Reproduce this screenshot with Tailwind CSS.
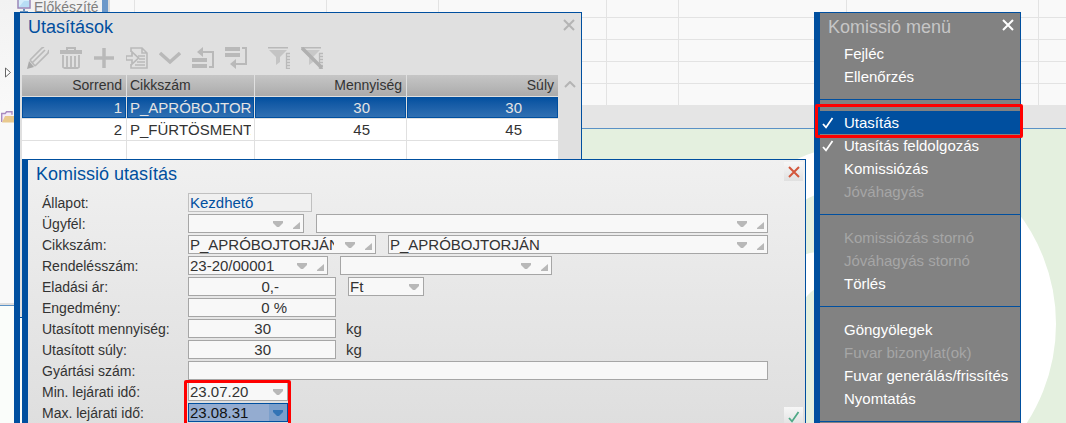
<!DOCTYPE html>
<html lang="hu">
<head>
<meta charset="utf-8">
<title>Komissió utasítás</title>
<script src="https://cdn.jsdelivr.net/npm/@tailwindcss/browser@4"></script>
</head>
<body class="bg-[#f9f9f9] font-['Liberation_Sans',Arial,sans-serif] text-[15px] text-[#333]">
<svg class="hidden">
  <symbol id="down" viewBox="0 0 10 6"><path d="M0 0h10v2L6 6H4L0 2z" fill="currentColor"/></symbol>
  <symbol id="corner" viewBox="0 0 7 7"><path d="M7 0v7H0V6z" fill="currentColor"/></symbol>
  <symbol id="tick" viewBox="0 0 12 12"><path d="M1 7l3 3.4L10.500 1" fill="none" stroke="currentColor" stroke-width="1.800"/></symbol>
  <symbol id="cross" viewBox="0 0 12 12"><path d="M1 1l10 10M11 1L1 11" fill="none" stroke="currentColor" stroke-width="2"/></symbol>
</svg>

<main class="relative h-screen overflow-hidden">
  <!-- Application behind the windows -->
  <div class="flex h-full flex-col">
    <div class="flex h-[105px] shrink-0">
      <div class="flex w-[110px] shrink-0 items-start bg-linear-to-b from-[#f2f2f2] to-[#f9f9f9] pl-[17px]">
        <svg class="h-[13px] w-[14px] shrink-0" viewBox="0 0 14 13"><path d="M1 0v8h12V0" fill="#d5eefb" stroke="#9a86b8" stroke-width="1.500"/><path d="M2 7l5-6h5v6z" fill="#b8def5"/><path d="M6 9h2v2h3v2H3v-2h3z" fill="#6d94bd"/></svg>
        <span class="ml-[3px] w-[68px] shrink-0 whitespace-nowrap text-[14px] leading-[14px] text-[#7f7f7f]">Előkészíté</span>
        <span class="h-4 w-[6px] bg-[#6c98c9]"></span>
        <span class="h-4 w-[2px] bg-[#dcdcdc]"></span>
      </div>
      <div class="flex min-w-0 grow">
        <div class="w-[25px] shrink-0 border-r border-[#e3e3e3]"></div>
        <div class="w-[192px] shrink-0 border-r border-[#e3e3e3]"></div>
        <div class="w-[112px] shrink-0 border-r border-[#e3e3e3]"></div>
        <div class="grow bg-[repeating-linear-gradient(#f9f9f9_0_21px,#e3e3e3_21px_22px)] bg-[position:0_-4px]">
          <div class="flex h-full">
            <div class="w-[168px] shrink-0 border-r border-[#e3e3e3]"></div>
            <div class="w-[72px] shrink-0 border-r border-[#e3e3e3]"></div>
            <div class="w-[168px] shrink-0 border-r border-[#e3e3e3]"></div>
            <div class="w-[192px] shrink-0 border-r border-[#e3e3e3]"></div>
          </div>
        </div>
      </div>
    </div>
    <div class="flex min-h-0 grow">
      <div class="flex w-[22px] shrink-0 flex-col">
        <div class="h-[200px] shrink-0 border-b-2 border-[#dedede]"></div>
        <div class="grow border-t border-[#5b92c6] bg-[#fafdfa]"></div>
      </div>
      <div class="flex min-w-0 grow flex-col">
        <div class="h-6 shrink-0 border-b border-[#5b92c6] bg-[#e5e5e5]"></div>
        <div class="flex grow justify-start overflow-hidden bg-[#e4f0df]">
          <svg class="ml-[658px] h-[294px] w-[386px] shrink-0" viewBox="680 129 386 294">
            <circle cx="874" cy="324" r="162" fill="none" stroke="#fff" stroke-width="40"/>
            <path d="M800 257Q808 252 820 252V286Q810 291 804 300z" fill="#fff"/>
          </svg>
        </div>
      </div>
    </div>
  </div>
  <svg class="absolute left-[5px] top-[67px] h-[11px] w-[6px]" viewBox="0 0 6 11"><path d="M.5 1v9l5-4.500z" fill="#fff" stroke="#666"/></svg>
  <svg class="absolute left-[1px] top-[111px] h-[12px] w-[14px]" viewBox="0 0 14 12"><path d="M.7 11V2.500h3.500L5.500.8H11v3" fill="#f5ecf8" stroke="#a98abf" stroke-width="1.400"/><path d="M1 11.500L4 5h10v6.500z" fill="#e9c98e"/></svg>
  <div class="absolute bottom-0 left-[14px] top-[317px] w-[6px] bg-[#004f9f]"></div>

  <!-- Instruction list -->
  <section class="absolute left-[14px] top-[12px] flex h-[306px] w-[568px] flex-col border border-l-[6px] border-[#004f9f] bg-[#e0e0e0]">
    <header class="flex h-[28px] items-center justify-between pl-2 pr-[6px]">
      <h2 class="text-[18px] text-[#004f9f]">Utasítások</h2>
      <button aria-label="Bezárás" class="mb-[5px] text-[#b4b4b4]"><svg class="size-3"><use href="#cross"/></svg></button>
    </header>
    <div class="flex h-[34px] items-center gap-[11px] pl-[7px] text-[#b9b9b9]">
      <button aria-label="Módosítás"><svg class="size-[22px]" viewBox="0 0 22 22"><path d="M0 22l2-8 5 6z" fill="#aaa"/><path d="M3 13L15 1l2-1M5 16L18 3M8 19L21 6l1-3M3 13l5 6" fill="none" stroke="currentColor" stroke-width="1.700"/></svg></button>
      <button aria-label="Törlés"><svg class="size-[22px]" viewBox="0 0 22 22"><path d="M7 3V1h8v2" fill="none" stroke="currentColor" stroke-width="2"/><path d="M0 3h22v4H0z" fill="currentColor"/><path d="M3 8v12l1.500 1h13l1.500-1V8M7 9v12M11 9v12M15 9v12" fill="none" stroke="currentColor" stroke-width="1.800"/></svg></button>
      <button aria-label="Új"><svg class="size-[22px]" viewBox="0 0 22 22"><path d="M11 1v20M1 11h20" stroke="currentColor" stroke-width="3.500"/></svg></button>
      <button aria-label="Beolvasás"><svg class="size-[22px]" viewBox="0 0 22 22"><path d="M5 5V1h11l5 5v15H5v-4M16 1v5h5" fill="none" stroke="currentColor" stroke-width="1.600"/><path d="M12 9h7M13 12h6M11 15h8M9 18h10" stroke="currentColor" stroke-width="1.400"/><path d="M0 9h6V5l6.500 6L6 17v-4H0z" fill="#e0e0e0" stroke="currentColor" stroke-width="1.700"/></svg></button>
      <button aria-label="Lenyitás"><svg class="size-[22px]" viewBox="0 0 22 22"><path d="M1 6l10 9L21 6" fill="none" stroke="currentColor" stroke-width="3.500"/></svg></button>
      <button aria-label="Felfelé"><svg class="size-[22px]" viewBox="0 0 22 22"><path d="M0 11h15v4H0zM0 17h15v4H0z" fill="currentColor"/><path d="M9 5h12v15h-4" fill="none" stroke="currentColor" stroke-width="2"/><path d="M5 5l6-5v10z" fill="currentColor"/></svg></button>
      <button aria-label="Lefelé"><svg class="size-[22px]" viewBox="0 0 22 22"><path d="M0 0h15v4H0zM0 6h15v4H0z" fill="currentColor"/><path d="M17 1h4v16H9" fill="none" stroke="currentColor" stroke-width="2"/><path d="M5 17l6-5v10z" fill="currentColor"/></svg></button>
      <button aria-label="Szűrő" class="ml-[10px]"><svg class="size-[22px]" viewBox="0 0 22 22"><path d="M0 0h20v1.500H0z" fill="currentColor"/><path d="M1 3h18l-7 7v5l-4 3v-8z" fill="#c4c4c4"/><path d="M18 6.500h4M18 9.500h4M18 12.500h4M18 15.500h4M18 18.500h4M18 21.500h4M18.500 6v16" stroke="currentColor" stroke-width="1.300"/></svg></button>
      <button aria-label="Szűrő törlése"><svg class="size-[22px]" viewBox="0 0 22 22"><path d="M0 0h20v1.500H0z" fill="currentColor"/><path d="M1 3h18l-7 7v5l-4 3v-8z" fill="#c8c8c8"/><path d="M18 6.500h4M18 9.500h4M18 12.500h4M18 15.500h4M18 18.500h4M18 21.500h4M18.500 6v16" stroke="currentColor" stroke-width="1.300"/><path d="M1 1l20 20" stroke="#b0b0b0" stroke-width="3.500"/></svg></button>
    </div>
    <div class="flex min-h-0 grow overflow-hidden pl-[2px]">
      <table class="w-[536px] table-fixed border-separate border-spacing-0 self-start bg-white leading-[21px]">
        <colgroup><col class="w-[105px]"><col class="w-[128px]"><col class="w-[152px]"><col></colgroup>
        <thead>
          <tr class="h-[22px] bg-linear-to-b from-[#c6c6c6] to-[#aaa] text-[14px]">
            <th class="border-b border-r border-[#e0e0e0] p-0 pr-1 text-right font-normal">Sorrend</th>
            <th class="border-b border-r border-[#e0e0e0] p-0 pl-[3px] text-left font-normal">Cikkszám</th>
            <th class="border-b border-r border-[#e0e0e0] p-0 pr-1 text-right font-normal">Mennyiség</th>
            <th class="border-b border-[#e0e0e0] p-0 pr-1 text-right font-normal">Súly</th>
          </tr>
        </thead>
        <tbody>
          <tr class="h-[22px] bg-linear-to-b from-[#004f9f] to-[#3373b4] text-[#e4e4e4]">
            <td class="border-b border-r border-[#e0e0e0] p-0 pr-1 text-right inset-shadow-[0_0_0_1px_#004f9f]">1</td>
            <td class="border-b border-r border-[#e0e0e0] p-0 px-[3px] inset-shadow-[0_0_0_1px_#004f9f]"><div class="h-[21px] overflow-hidden whitespace-nowrap">P_APRÓBOJTORJÁN</div></td>
            <td class="border-b border-r border-[#e0e0e0] p-0 pr-9 text-right inset-shadow-[0_0_0_1px_#004f9f]">30</td>
            <td class="border-b border-[#e0e0e0] p-0 pr-9 text-right inset-shadow-[0_0_0_1px_#004f9f]">30</td>
          </tr>
          <tr class="h-[22px]">
            <td class="border-b border-r border-[#e0e0e0] p-0 pr-1 text-right">2</td>
            <td class="border-b border-r border-[#e0e0e0] p-0 px-[3px]"><div class="h-[21px] overflow-hidden whitespace-nowrap">P_FÜRTÖSMENTA</div></td>
            <td class="border-b border-r border-[#e0e0e0] p-0 pr-9 text-right">45</td>
            <td class="border-b border-[#e0e0e0] p-0 pr-9 text-right">45</td>
          </tr>
          <tr class="h-[22px]">
            <td class="border-r border-[#e0e0e0]"></td><td class="border-r border-[#e0e0e0]"></td><td class="border-r border-[#e0e0e0]"></td><td></td>
          </tr>
        </tbody>
      </table>
      <button aria-label="Görgetés fel" class="ml-[6px] mt-[6px] self-start text-[#b4b4b4]"><svg class="h-[7px] w-3" viewBox="0 0 12 7"><path d="M1 6l5-5 5 5" fill="none" stroke="currentColor" stroke-width="2"/></svg></button>
    </div>
  </section>

  <!-- Instruction form -->
  <section class="absolute left-[22px] top-[159px] w-[784px] border border-l-[6px] border-[#004f9f] bg-linear-to-b from-[#f0f0f0] to-[#dedede]">
    <header class="flex h-[33px] items-start justify-between pl-2 pr-[2px]">
      <h2 class="text-[18px] leading-[28px] text-[#004f9f]">Komissió utasítás</h2>
      <button aria-label="Bezárás" class="mt-[2px] flex size-[19px] items-center justify-center bg-linear-to-b from-[#f7f7f7] to-[#e0e0e0] text-[#d3573c]"><svg class="size-3"><use href="#cross"/></svg></button>
    </header>
    <div class="flex items-end justify-between pr-[2px]">
      <form class="flex flex-col gap-[2px] pb-2 pl-[14px] leading-[19px]">
        <div class="flex h-[19px]"><label for="f1" class="w-[146px] text-[14px] leading-[21px]">Állapot:</label>
          <input id="f1" readonly value="Kezdhető" class="w-[124px] border border-[#c0c0c0] bg-[#f0f0f0] px-[1px] text-[#004f9f]"></div>
        <div class="flex h-[19px]"><label for="f2" class="w-[146px] text-[14px] leading-[21px]">Ügyfél:</label>
          <div class="flex w-[116px] items-center border border-[#a6a6a6] bg-[#f8f8f8] pr-[3px] text-[#b8b8b8]"><input id="f2" class="w-0 grow px-[1px] text-[#333]"><button type="button" aria-label="Lista" class="ml-[10px]"><svg class="h-[6px] w-[10px]"><use href="#down"/></svg></button><button type="button" aria-label="Megnyitás" class="ml-[10px] mt-1"><svg class="size-[7px]"><use href="#corner"/></svg></button></div>
          <div class="ml-3 flex w-[452px] items-center border border-[#a6a6a6] bg-[#f8f8f8] pr-[3px] text-[#b8b8b8]"><input aria-label="Ügyfél neve" class="w-0 grow px-[1px] text-[#333]"><button type="button" aria-label="Lista" class="ml-[10px]"><svg class="h-[6px] w-[10px]"><use href="#down"/></svg></button><button type="button" aria-label="Megnyitás" class="ml-[10px] mt-1"><svg class="size-[7px]"><use href="#corner"/></svg></button></div></div>
        <div class="flex h-[19px]"><label for="f3" class="w-[146px] text-[14px] leading-[21px]">Cikkszám:</label>
          <div class="flex w-[188px] items-center border border-[#a6a6a6] bg-[#f8f8f8] pr-[3px] text-[#b8b8b8]"><input id="f3" value="P_APRÓBOJTORJÁN" class="w-0 grow px-[1px] text-[#333]"><button type="button" aria-label="Lista" class="ml-[10px]"><svg class="h-[6px] w-[10px]"><use href="#down"/></svg></button><button type="button" aria-label="Megnyitás" class="ml-[10px] mt-1"><svg class="size-[7px]"><use href="#corner"/></svg></button></div>
          <div class="ml-3 flex w-[380px] items-center border border-[#a6a6a6] bg-[#f8f8f8] pr-[3px] text-[#b8b8b8]"><input aria-label="Cikk neve" value="P_APRÓBOJTORJÁN" class="w-0 grow px-[1px] text-[#333]"><button type="button" aria-label="Lista" class="ml-[10px]"><svg class="h-[6px] w-[10px]"><use href="#down"/></svg></button><button type="button" aria-label="Megnyitás" class="ml-[10px] mt-1"><svg class="size-[7px]"><use href="#corner"/></svg></button></div></div>
        <div class="flex h-[19px]"><label for="f4" class="w-[146px] text-[14px] leading-[21px]">Rendelésszám:</label>
          <div class="flex w-[140px] items-center border border-[#a6a6a6] bg-[#f8f8f8] pr-[3px] text-[#b8b8b8]"><input id="f4" value="23-20/00001" class="w-0 grow px-[1px] text-[#333]"><button type="button" aria-label="Lista" class="ml-[10px]"><svg class="h-[6px] w-[10px]"><use href="#down"/></svg></button><button type="button" aria-label="Megnyitás" class="ml-[10px] mt-1"><svg class="size-[7px]"><use href="#corner"/></svg></button></div>
          <div class="ml-3 flex w-[212px] items-center border border-[#a6a6a6] bg-[#f8f8f8] pr-[3px] text-[#b8b8b8]"><input aria-label="Rendelés tétele" class="w-0 grow px-[1px] text-[#333]"><button type="button" aria-label="Lista" class="ml-[10px]"><svg class="h-[6px] w-[10px]"><use href="#down"/></svg></button><button type="button" aria-label="Megnyitás" class="ml-[10px] mt-1"><svg class="size-[7px]"><use href="#corner"/></svg></button></div></div>
        <div class="flex h-[19px]"><label for="f5" class="w-[146px] text-[14px] leading-[21px]">Eladási ár:</label>
          <input id="f5" value="0,-" class="w-[148px] border border-[#a6a6a6] bg-[#f8f8f8] pr-14 text-right">
          <div class="relative ml-3 flex w-[76px] text-[#b8b8b8]"><select aria-label="Pénznem" class="w-full appearance-none border border-[#a6a6a6] bg-[#f8f8f8] px-[1px] leading-[17px] text-[#333]"><option>Ft</option></select><svg class="pointer-events-none absolute right-[5px] top-[7px] h-[6px] w-[10px]"><use href="#down"/></svg></div></div>
        <div class="flex h-[19px]"><label for="f6" class="w-[146px] text-[14px] leading-[21px]">Engedmény:</label>
          <input id="f6" value="0 %" class="w-[148px] border border-[#a6a6a6] bg-[#f8f8f8] pr-12 text-right"></div>
        <div class="flex h-[19px]"><label for="f7" class="w-[146px] text-[14px] leading-[21px]">Utasított mennyiség:</label>
          <input id="f7" value="30" class="w-[148px] border border-[#a6a6a6] bg-[#f8f8f8] pr-16 text-right"><span class="ml-[10px]">kg</span></div>
        <div class="flex h-[19px]"><label for="f8" class="w-[146px] text-[14px] leading-[21px]">Utasított súly:</label>
          <input id="f8" value="30" class="w-[148px] border border-[#a6a6a6] bg-[#f8f8f8] pr-16 text-right"><span class="ml-[10px]">kg</span></div>
        <div class="flex h-[19px]"><label for="f9" class="w-[146px] text-[14px] leading-[21px]">Gyártási szám:</label>
          <input id="f9" class="w-[580px] border border-[#a6a6a6] bg-[#f8f8f8] px-[1px]"></div>
        <div class="flex h-[19px]"><label for="f10" class="w-[146px] text-[14px] leading-[21px]">Min. lejárati idő:</label>
          <div class="flex w-[100px] items-center border border-[#a6a6a6] bg-[#f8f8f8] pr-1 text-[#b8b8b8]"><input id="f10" value="23.07.20" class="w-0 grow px-[1px] text-[#333]"><button type="button" aria-label="Naptár"><svg class="h-[6px] w-[10px]"><use href="#down"/></svg></button></div></div>
        <div class="flex h-[19px]"><label for="f11" class="w-[146px] text-[14px] leading-[21px]">Max. lejárati idő:</label>
          <div class="flex w-[100px] items-center border border-[#004f9f] bg-[#94acd0] text-[#3274b5]"><input id="f11" value="23.08.31" class="w-0 grow px-[1px] text-[#111]"><button type="button" aria-label="Naptár" class="flex h-full w-[18px] items-center justify-center bg-[#7b9fcb]"><svg class="h-[6px] w-[10px]"><use href="#down"/></svg></button></div></div>
      </form>
      <button aria-label="Rendben" class="mb-1 flex size-[19px] items-center justify-center bg-linear-to-b from-[#f7f7f7] to-[#e0e0e0] text-[#4fa987]"><svg class="size-3"><use href="#tick"/></svg></button>
    </div>
  </section>
  <div class="absolute left-[184px] top-[380px] h-[60px] w-[107px] rounded-xs border-3 border-[#f00]"></div>

  <!-- Menu -->
  <nav class="absolute left-[814px] top-[12px] w-[207px] border border-l-[6px] border-[#004f9f] bg-[#828282] leading-[23px] text-white">
    <header class="flex h-[29px] items-center justify-between pl-2 pr-[6px]">
      <h2 class="text-[18px] text-[#c6c6c6]">Komissió menü</h2>
      <button aria-label="Bezárás" class="mb-[5px]"><svg class="size-3"><use href="#cross"/></svg></button>
    </header>
    <button class="block h-[23px] w-full pl-6 text-left">Fejléc</button>
    <button class="block h-[23px] w-full pl-6 text-left">Ellenőrzés</button>
    <hr class="mb-[11px] mt-[11px] border-[#004f9f]">
    <button class="flex h-[23px] w-full items-center bg-[#004f9f] pl-[2px] text-left"><svg class="mr-[10px] size-3"><use href="#tick"/></svg>Utasítás</button>
    <button class="flex h-[23px] w-full items-center pl-[2px] text-left"><svg class="mr-[10px] size-3"><use href="#tick"/></svg>Utasítás feldolgozás</button>
    <button class="block h-[23px] w-full pl-6 text-left">Komissiózás</button>
    <button disabled class="block h-[23px] w-full pl-6 text-left text-[#a6a6a6]">Jóváhagyás</button>
    <hr class="mb-[11px] mt-[11px] border-[#004f9f]">
    <button disabled class="block h-[23px] w-full pl-6 text-left text-[#a6a6a6]">Komissiózás stornó</button>
    <button disabled class="block h-[23px] w-full pl-6 text-left text-[#a6a6a6]">Jóváhagyás stornó</button>
    <button class="block h-[23px] w-full pl-6 text-left">Törlés</button>
    <hr class="mb-[11px] mt-[11px] border-[#004f9f]">
    <button class="block h-[23px] w-full pl-6 text-left">Göngyölegek</button>
    <button disabled class="block h-[23px] w-full pl-6 text-left text-[#a6a6a6]">Fuvar bizonylat(ok)</button>
    <button class="block h-[23px] w-full pl-6 text-left">Fuvar generálás/frissítés</button>
    <button class="block h-[23px] w-full pl-6 text-left">Nyomtatás</button>
    <hr class="mb-[11px] mt-[11px] border-[#004f9f]">
  </nav>
  <div class="absolute left-[815px] top-[104px] h-[34px] w-[208px] rounded-xs border-3 border-[#f00]"></div>
</main>
</body>
</html>
